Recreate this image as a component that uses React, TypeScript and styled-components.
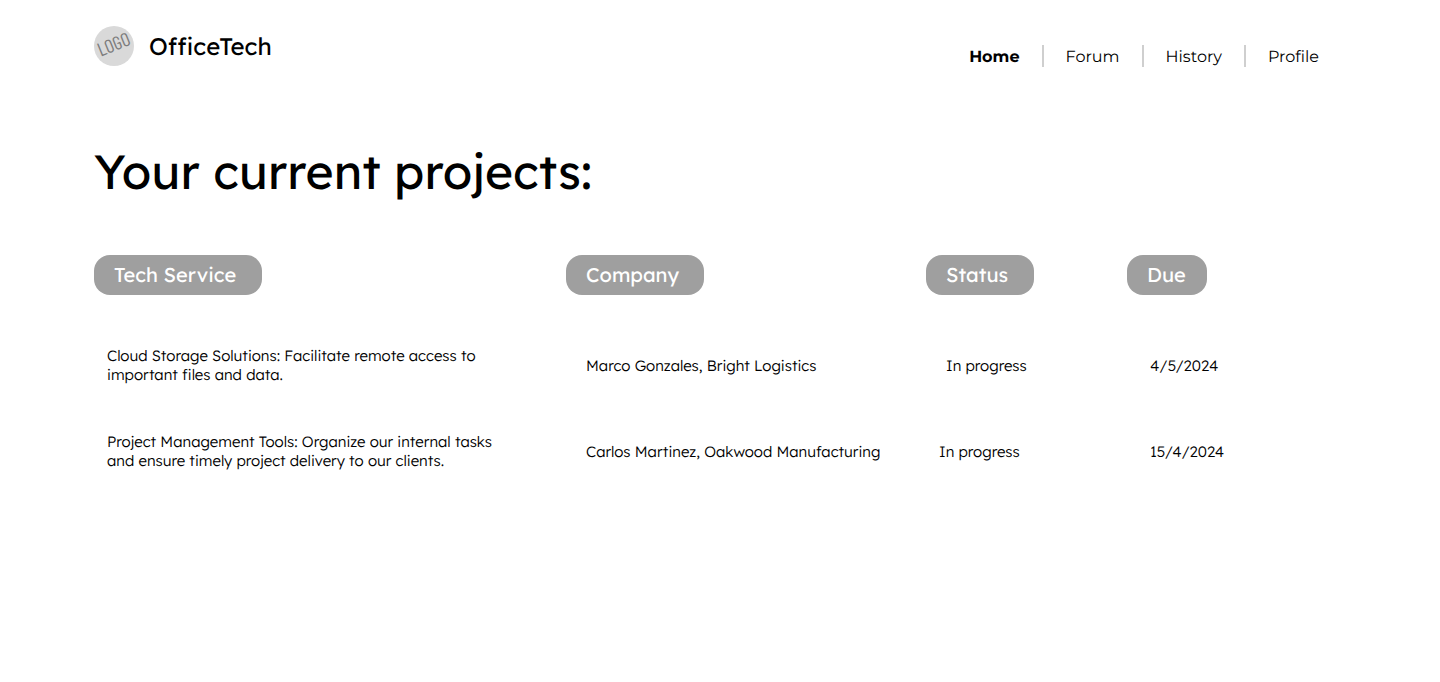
import React from "react";
import styled, { createGlobalStyle } from "styled-components";

const GlobalStyle = createGlobalStyle`
  * { box-sizing: border-box; }
  body {
    margin: 0;
    background: #fff;
    color: #000;
    font-family: Lexend, Inter, sans-serif;
    text-rendering: geometricPrecision;
  }
`;

const Header = styled.header`
  display: flex;
  justify-content: space-between;
  align-items: flex-start;
  padding: 26px 121px 0 94px;
`;

const Brand = styled.a`
  display: flex;
  align-items: center;
  gap: 15px;
  color: inherit;
  text-decoration: none;
`;

const Logo = styled.span`
  display: flex;
  align-items: center;
  justify-content: center;
  width: 40px;
  height: 40px;
  padding-bottom: 4px;
  border-radius: 50%;
  background: #d9d9d9;
`;

const LogoText = styled.span`
  transform: rotate(-22deg);
  color: #7c7c7c;
  font-family: "Barlow Condensed", "Roboto Condensed", "Liberation Sans", sans-serif;
  font-size: 19px;
  line-height: 18px;
`;

const BrandName = styled.span`
  font-size: 24px;
  line-height: 30px;
`;

const NavList = styled.ul`
  display: flex;
  margin: 19px 0 0;
  padding: 0;
  list-style: none;
`;

const NavItem = styled.li`
  & + & {
    margin-left: 22px;
    padding-left: 22px;
    border-left: 2px solid #cfcfcf;
  }
`;

const NavLink = styled.a<{ $active?: boolean }>`
  display: block;
  padding-top: 4px;
  color: inherit;
  font-family: Montserrat, Inter, sans-serif;
  font-size: 16px;
  font-weight: ${(p) => (p.$active ? 700 : 400)};
  line-height: 18px;
  text-decoration: none;
`;

const Main = styled.main`
  padding: 74px 94px 0;
`;

const Title = styled.h1`
  margin: 0;
  font-size: 48px;
  font-weight: 400;
  line-height: 60px;
`;

const Table = styled.table`
  width: 100%;
  margin-top: 54px;
  border-collapse: collapse;
  table-layout: fixed;
`;

const HeadCell = styled.th<{ $width?: number }>`
  width: ${(p) => (p.$width ? `${p.$width}px` : "auto")};
  padding: 0 0 27px;
  text-align: left;
`;

const Chip = styled.span<{ $width: number }>`
  display: block;
  width: ${(p) => p.$width}px;
  padding: 0 20px;
  border-radius: 16px;
  background: #9f9f9f;
  color: #fff;
  font-size: 20px;
  font-weight: 400;
  line-height: 40px;
  white-space: nowrap;
`;

const Cell = styled.td<{ $inset: number }>`
  height: 86px;
  padding: 0 0 0 ${(p) => p.$inset}px;
  font-size: 15px;
  font-weight: 300;
  line-height: 19px;
  vertical-align: middle;
`;

const Lines = styled.span`
  display: block;
  white-space: pre-line;
`;

const links = ["Home", "Forum", "History", "Profile"];

const columns = [
  { label: "Tech Service", chip: 168 },
  { label: "Company", chip: 138, width: 360 },
  { label: "Status", chip: 108, width: 201 },
  { label: "Due", chip: 80, width: 219 },
];

const projects = [
  {
    service: "Cloud Storage Solutions: Facilitate remote access to\nimportant files and data.",
    company: "Marco Gonzales, Bright Logistics",
    status: "In progress",
    statusInset: 20,
    due: "4/5/2024",
  },
  {
    service: "Project Management Tools: Organize our internal tasks\nand ensure timely project delivery to our clients.",
    company: "Carlos Martinez, Oakwood Manufacturing",
    status: "In progress",
    statusInset: 13,
    due: "15/4/2024",
  },
];

export default function App() {
  return (
    <>
      <GlobalStyle />
      <Header>
        <Brand href="#">
          <Logo>
            <LogoText>LOGO</LogoText>
          </Logo>
          <BrandName>OfficeTech</BrandName>
        </Brand>
        <nav>
          <NavList>
            {links.map((link, i) => (
              <NavItem key={link}>
                <NavLink href="#" $active={i === 0}>
                  {link}
                </NavLink>
              </NavItem>
            ))}
          </NavList>
        </nav>
      </Header>
      <Main>
        <Title>Your current projects:</Title>
        <Table>
          <thead>
            <tr>
              {columns.map((c) => (
                <HeadCell key={c.label} scope="col" $width={c.width}>
                  <Chip $width={c.chip}>{c.label}</Chip>
                </HeadCell>
              ))}
            </tr>
          </thead>
          <tbody>
            {projects.map((p) => (
              <tr key={p.company}>
                <Cell $inset={13}>
                  <Lines>{p.service}</Lines>
                </Cell>
                <Cell $inset={20}>{p.company}</Cell>
                <Cell $inset={p.statusInset}>{p.status}</Cell>
                <Cell $inset={23}>{p.due}</Cell>
              </tr>
            ))}
          </tbody>
        </Table>
      </Main>
    </>
  );
}
